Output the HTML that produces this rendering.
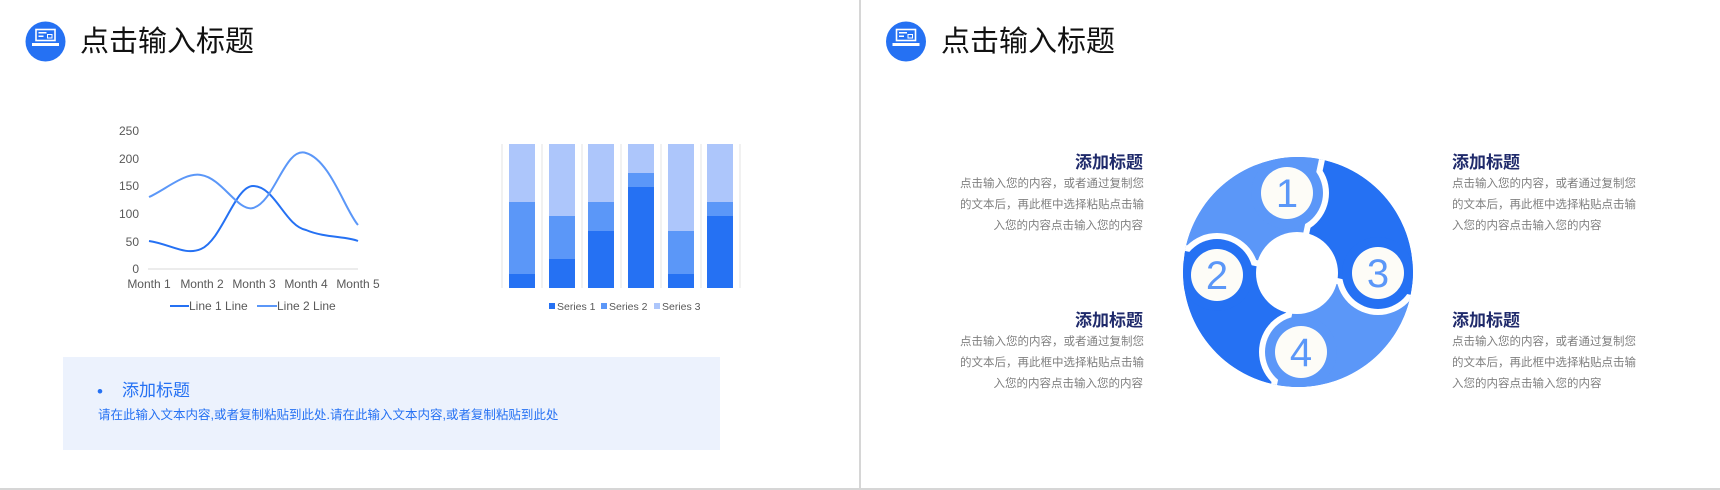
<!DOCTYPE html>
<html><head><meta charset="utf-8"><style>
html,body{margin:0;padding:0;background:#fff;}
body{width:1720px;height:490px;position:relative;overflow:hidden;font-family:"Liberation Sans","Noto Sans CJK SC",sans-serif;}
.t{position:absolute;white-space:nowrap;}
.title{font-size:29px;color:#111;top:22px;line-height:40px;}
.h{font-size:17px;font-weight:bold;color:#1f2a6b;line-height:22px;}
.b{font-size:11.5px;color:#808080;line-height:21px;}
</style></head><body>
<div style="position:absolute;left:859px;top:0;width:2px;height:490px;background:#d6d6d6"></div>
<div style="position:absolute;left:0;top:488px;width:1720px;height:2px;background:#d6d6d6"></div>

<svg width="1720" height="490" style="position:absolute;left:0;top:0">
<defs>
<clipPath id="cc"><circle cx="1298" cy="272" r="115"/></clipPath>
<clipPath id="s1"><path d="M1298,272 L1150,240 L1150,120 L1330,120 L1324,150 Z"/></clipPath>
<clipPath id="s3"><path d="M1298,272 L1324,150 L1330,120 L1450,120 L1450,306 L1420,300 Z"/></clipPath>
<clipPath id="s4"><path d="M1298,272 L1420,300 L1450,306 L1450,420 L1268,420 L1272,394 Z"/></clipPath>
<clipPath id="s2"><path d="M1298,272 L1272,394 L1268,420 L1150,420 L1150,240 L1176,246 Z"/></clipPath>
<g id="ic"><circle cx="0" cy="0" r="20" fill="#2571f3"/>
<rect x="-9.5" y="-12" width="19" height="11" fill="none" stroke="#fff" stroke-width="1.6"/>
<rect x="-7" y="-9.5" width="8" height="1.5" fill="#fff"/><rect x="-7" y="-6" width="5" height="1.5" fill="#fff"/><rect x="2" y="-7" width="4.5" height="3.5" fill="none" stroke="#fff" stroke-width="1"/>
<rect x="-13.5" y="1.5" width="27" height="3" fill="#fff"/></g></defs>
<use href="#ic" x="45.5" y="41.5"/>
<use href="#ic" x="906" y="41.5"/>

<!-- line chart -->
<line x1="148" y1="269" x2="358" y2="269" stroke="#d9d9d9" stroke-width="1"/>
<g font-size="12" fill="#595959" text-anchor="end">
<text x="139" y="135">250</text><text x="139" y="163">200</text><text x="139" y="190">150</text><text x="139" y="218">100</text><text x="139" y="246">50</text><text x="139" y="273">0</text></g>
<g font-size="12" fill="#595959" text-anchor="middle">
<text x="149" y="288">Month 1</text><text x="202" y="288">Month 2</text><text x="254" y="288">Month 3</text><text x="306" y="288">Month 4</text><text x="358" y="288">Month 5</text></g>
<path d="M149,241 C170,244 185,256 201,249 C222,240 235,186 253,186 C275,186 285,226 306,230 C325,238 345,236 358,241" fill="none" stroke="#2571f3" stroke-width="2"/>
<path d="M149,197 C165,190 185,172 201,175 C222,178 238,212 253,208 C275,202 285,146 306,153 C330,160 345,210 358,225" fill="none" stroke="#5b97f8" stroke-width="2"/>
<line x1="170" y1="306" x2="189" y2="306" stroke="#2571f3" stroke-width="2"/>
<line x1="257" y1="306" x2="277" y2="306" stroke="#5b97f8" stroke-width="2"/>
<g font-size="12" fill="#595959"><text x="189" y="310">Line 1 Line</text><text x="277" y="310">Line 2 Line</text></g>

<!-- bar chart -->
<g stroke="#e3e3e3" stroke-width="1">
<line x1="502" y1="144" x2="502" y2="288"/><line x1="542" y1="144" x2="542" y2="288"/><line x1="582" y1="144" x2="582" y2="288"/><line x1="621" y1="144" x2="621" y2="288"/><line x1="661" y1="144" x2="661" y2="288"/><line x1="701" y1="144" x2="701" y2="288"/><line x1="740" y1="144" x2="740" y2="288"/></g>
<g>
<rect x="509" y="144" width="26" height="58" fill="#adc6fb"/><rect x="509" y="202" width="26" height="72" fill="#5b97f8"/><rect x="509" y="274" width="26" height="14" fill="#2571f3"/>
<rect x="549" y="144" width="26" height="72" fill="#adc6fb"/><rect x="549" y="216" width="26" height="43" fill="#5b97f8"/><rect x="549" y="259" width="26" height="29" fill="#2571f3"/>
<rect x="588" y="144" width="26" height="58" fill="#adc6fb"/><rect x="588" y="202" width="26" height="29" fill="#5b97f8"/><rect x="588" y="231" width="26" height="57" fill="#2571f3"/>
<rect x="628" y="144" width="26" height="29" fill="#adc6fb"/><rect x="628" y="173" width="26" height="14" fill="#5b97f8"/><rect x="628" y="187" width="26" height="101" fill="#2571f3"/>
<rect x="668" y="144" width="26" height="87" fill="#adc6fb"/><rect x="668" y="231" width="26" height="43" fill="#5b97f8"/><rect x="668" y="274" width="26" height="14" fill="#2571f3"/>
<rect x="707" y="144" width="26" height="58" fill="#adc6fb"/><rect x="707" y="202" width="26" height="14" fill="#5b97f8"/><rect x="707" y="216" width="26" height="72" fill="#2571f3"/>
</g>
<rect x="549" y="303" width="6" height="6" fill="#2571f3"/><rect x="601" y="303" width="6" height="6" fill="#5b97f8"/><rect x="654" y="303" width="6" height="6" fill="#adc6fb"/>
<g font-size="10.5" fill="#595959"><text x="557" y="310">Series 1</text><text x="609" y="310">Series 2</text><text x="662" y="310">Series 3</text></g>

<!-- ring -->
<g clip-path="url(#cc)">
<circle cx="1298" cy="272" r="115" fill="#2571f3"/>
<path d="M1298,272 L1176,246 A125,125 0 0 1 1324,150 Z" fill="#5b97f8"/>
<path d="M1298,272 L1420,300 A125,125 0 0 1 1272,394 Z" fill="#5b97f8"/>
<g stroke="#fff" stroke-width="6" fill="none">
<path d="M1324,150 L1298,272"/>
<path d="M1420,300 L1298,272"/>
<path d="M1272,394 L1298,272"/>
<path d="M1176,246 L1298,272"/>
</g>
<circle cx="1287" cy="193" r="42" fill="#fff" clip-path="url(#s3)"/>
<circle cx="1378" cy="273" r="42" fill="#fff" clip-path="url(#s4)"/>
<circle cx="1301" cy="352" r="42" fill="#fff" clip-path="url(#s2)"/>
<circle cx="1217" cy="275" r="42" fill="#fff" clip-path="url(#s1)"/>
<circle cx="1287" cy="193" r="36" fill="#5b97f8"/>
<circle cx="1217" cy="275" r="36" fill="#2571f3"/>
<circle cx="1378" cy="273" r="36" fill="#2571f3"/>
<circle cx="1301" cy="352" r="36" fill="#5b97f8"/>
</g>
<circle cx="1297" cy="273" r="41" fill="#fff"/>
<g fill="#fdfcf7"><circle cx="1287" cy="193" r="26"/><circle cx="1217" cy="275" r="26"/><circle cx="1378" cy="273" r="26"/><circle cx="1301" cy="352" r="26"/></g>
<g font-size="40" fill="#5b97f8" text-anchor="middle">
<text x="1287" y="207">1</text><text x="1217" y="289">2</text><text x="1378" y="287">3</text><text x="1301" y="366">4</text></g>
</svg>

<div class="t title" style="left:80px">点击输入标题</div>
<div class="t title" style="left:941px">点击输入标题</div>

<div style="position:absolute;left:63px;top:357px;width:657px;height:93px;background:#ecf2fd"></div>
<div class="t" style="left:97px;top:381px;font-size:17px;color:#2571f3;line-height:22px">•</div>
<div class="t" style="left:122px;top:380px;font-size:17px;color:#2571f3;line-height:22px">添加标题</div>
<div class="t" style="left:98px;top:406px;font-size:12.5px;color:#2571f3;line-height:18px">请在此输入文本内容,或者复制粘贴到此处.请在此输入文本内容,或者复制粘贴到此处</div>

<div class="t" style="left:960px;top:152px;width:183px;text-align:right">
<div class="h">添加标题</div>
<div class="b">点击输入您的内容，或者通过复制您<br>的文本后，再此框中选择粘贴点击输<br>入您的内容点击输入您的内容</div></div>
<div class="t" style="left:960px;top:310px;width:183px;text-align:right">
<div class="h">添加标题</div>
<div class="b">点击输入您的内容，或者通过复制您<br>的文本后，再此框中选择粘贴点击输<br>入您的内容点击输入您的内容</div></div>
<div class="t" style="left:1452px;top:152px">
<div class="h">添加标题</div>
<div class="b">点击输入您的内容，或者通过复制您<br>的文本后，再此框中选择粘贴点击输<br>入您的内容点击输入您的内容</div></div>
<div class="t" style="left:1452px;top:310px">
<div class="h">添加标题</div>
<div class="b">点击输入您的内容，或者通过复制您<br>的文本后，再此框中选择粘贴点击输<br>入您的内容点击输入您的内容</div></div>
</body></html>
